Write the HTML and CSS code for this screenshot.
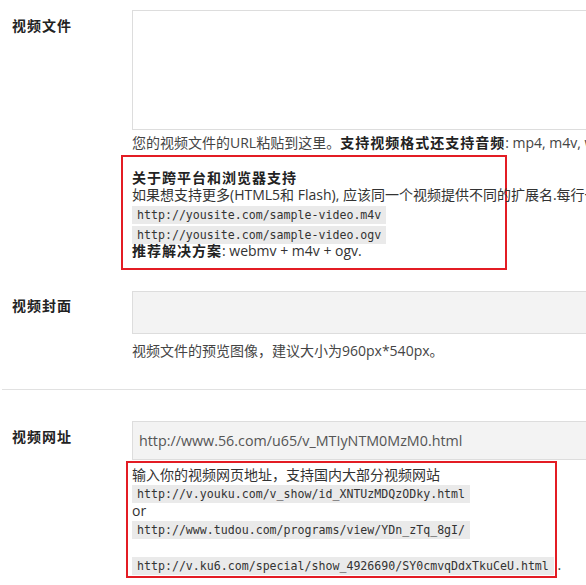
FILE: index.html
```html
<!DOCTYPE html>
<html lang="zh-CN">
<head>
<meta charset="utf-8">
<title>视频设置</title>
<link rel="stylesheet" href="styles.css">
</head>
<body>
<div class="page">
  <div class="row row-file">
    <div class="label">视频文件</div>
    <div class="field">
      <div class="textarea"></div>
      <p class="desc">您的视频文件的URL粘贴到这里。<strong>支持视频格式还支持音频</strong>: mp4, m4v, webmv, ogv, wmv, flv, mp3, m4a, ogg, wav, wma.</p>
      <div class="note note-1">
        <div class="note-title">关于跨平台和浏览器支持</div>
        <div class="note-line">如果想支持更多(HTML5和 Flash), 应该同一个视频提供不同的扩展名.每行一个.</div>
        <div class="code-line first"><code>http://yousite.com/sample-video.m4v</code></div>
        <div class="code-line second"><code>http://yousite.com/sample-video.ogv</code></div>
        <div class="note-line"><strong>推荐解决方案</strong>: webmv + m4v + ogv.</div>
      </div>
    </div>
  </div>

  <div class="row row-cover">
    <div class="label">视频封面</div>
    <div class="field">
      <div class="input input-cover"></div>
      <p class="desc desc-cover">视频文件的预览图像，建议大小为960px*540px。</p>
    </div>
  </div>

  <div class="divider"></div>

  <div class="row row-url">
    <div class="label">视频网址</div>
    <div class="field">
      <div class="input input-url">http://www.56.com/u65/v_MTIyNTM0MzM0.html</div>
      <div class="note note-2">
        <div class="line">输入你的视频网页地址，支持国内大部分视频网站</div>
        <div class="line"><code>http://v.youku.com/v_show/id_XNTUzMDQzODky.html</code></div>
        <div class="line">or</div>
        <div class="line"><code>http://www.tudou.com/programs/view/YDn_zTq_8gI/</code></div>
        <div class="line"></div>
        <div class="line"><code>http://v.ku6.com/special/show_4926690/SY0cmvqDdxTkuCeU.html</code> .</div>
      </div>
    </div>
  </div>
</div>
</body>
</html>
```

FILE: styles.css
```css
html, body {
  margin: 0;
  padding: 0;
  background: #fff;
  overflow: hidden;
}

body {
  font-family: "Open Sans", "Noto Sans CJK SC", sans-serif;
  font-size: 14px;
  color: #444;
}

.page {
  width: 1000px;
}

.row {
  display: flex;
}

.label {
  width: 120px;
  padding-left: 12px;
  flex: none;
  font-family: "Noto Sans CJK SC", sans-serif;
  font-weight: bold;
  font-size: 14px;
  line-height: 20px;
  letter-spacing: 1px;
  color: #222;
}

.field {
  flex: none;
  width: 860px;
}

code {
  font-family: "DejaVu Sans Mono", "Liberation Mono", monospace;
  font-size: 11.6px;
  color: #333;
  background: #eaeaea;
  padding: 0 5px;
  display: inline-block;
  line-height: 18px;
}

strong {
  color: #222;
  font-family: "Noto Sans CJK SC", sans-serif;
  letter-spacing: 1px;
}

/* Row 1 */
.row-file {
  padding-top: 10px;
}

.row-file .label {
  padding-top: 5px;
}

.textarea {
  height: 118px;
  border: 1px solid #ddd;
  background: #fff;
}

.desc {
  margin: 3px 0 0;
  line-height: 18px;
  white-space: nowrap;
}

.note {
  border: 2px solid #e31c24;
  white-space: nowrap;
}

.note-1 {
  width: 373px;
  margin: 3px 0 0 -11px;
  padding: 11px 0 9px 9px;
  color: #333;
}

.note-title {
  line-height: 18px;
  font-weight: bold;
  font-family: "Noto Sans CJK SC", sans-serif;
  letter-spacing: 1px;
  color: #222;
}

.note-line {
  line-height: 17px;
}

.code-line {
  height: 18px;
}

.code-line.first {
  margin-top: 1px;
}

.code-line.second {
  margin-top: 2px;
}

/* Row 2 */
.row-cover {
  padding-top: 21px;
}

.row-cover .label {
  padding-top: 4px;
}

.input {
  border: 1px solid #ddd;
  background: #f3f3f3;
}

.input-cover {
  height: 41px;
}

.desc-cover {
  margin-top: 8px;
}

.divider {
  margin: 29px 0 0 2px;
  height: 1px;
  background: #e1e1e1;
}

/* Row 3 */
.row-url {
  padding-top: 31px;
}

.row-url .label {
  padding-top: 5px;
}

.input-url {
  height: 37px;
  line-height: 38px;
  padding-left: 6px;
  font-size: 14.3px;
  color: #555;
}

.note-2 {
  width: 423px;
  margin: 1px 0 0 -6px;
  padding: 3px 0 2px 4px;
  color: #333;
}

.note-2 .line {
  height: 18px;
  line-height: 18px;
}
```
